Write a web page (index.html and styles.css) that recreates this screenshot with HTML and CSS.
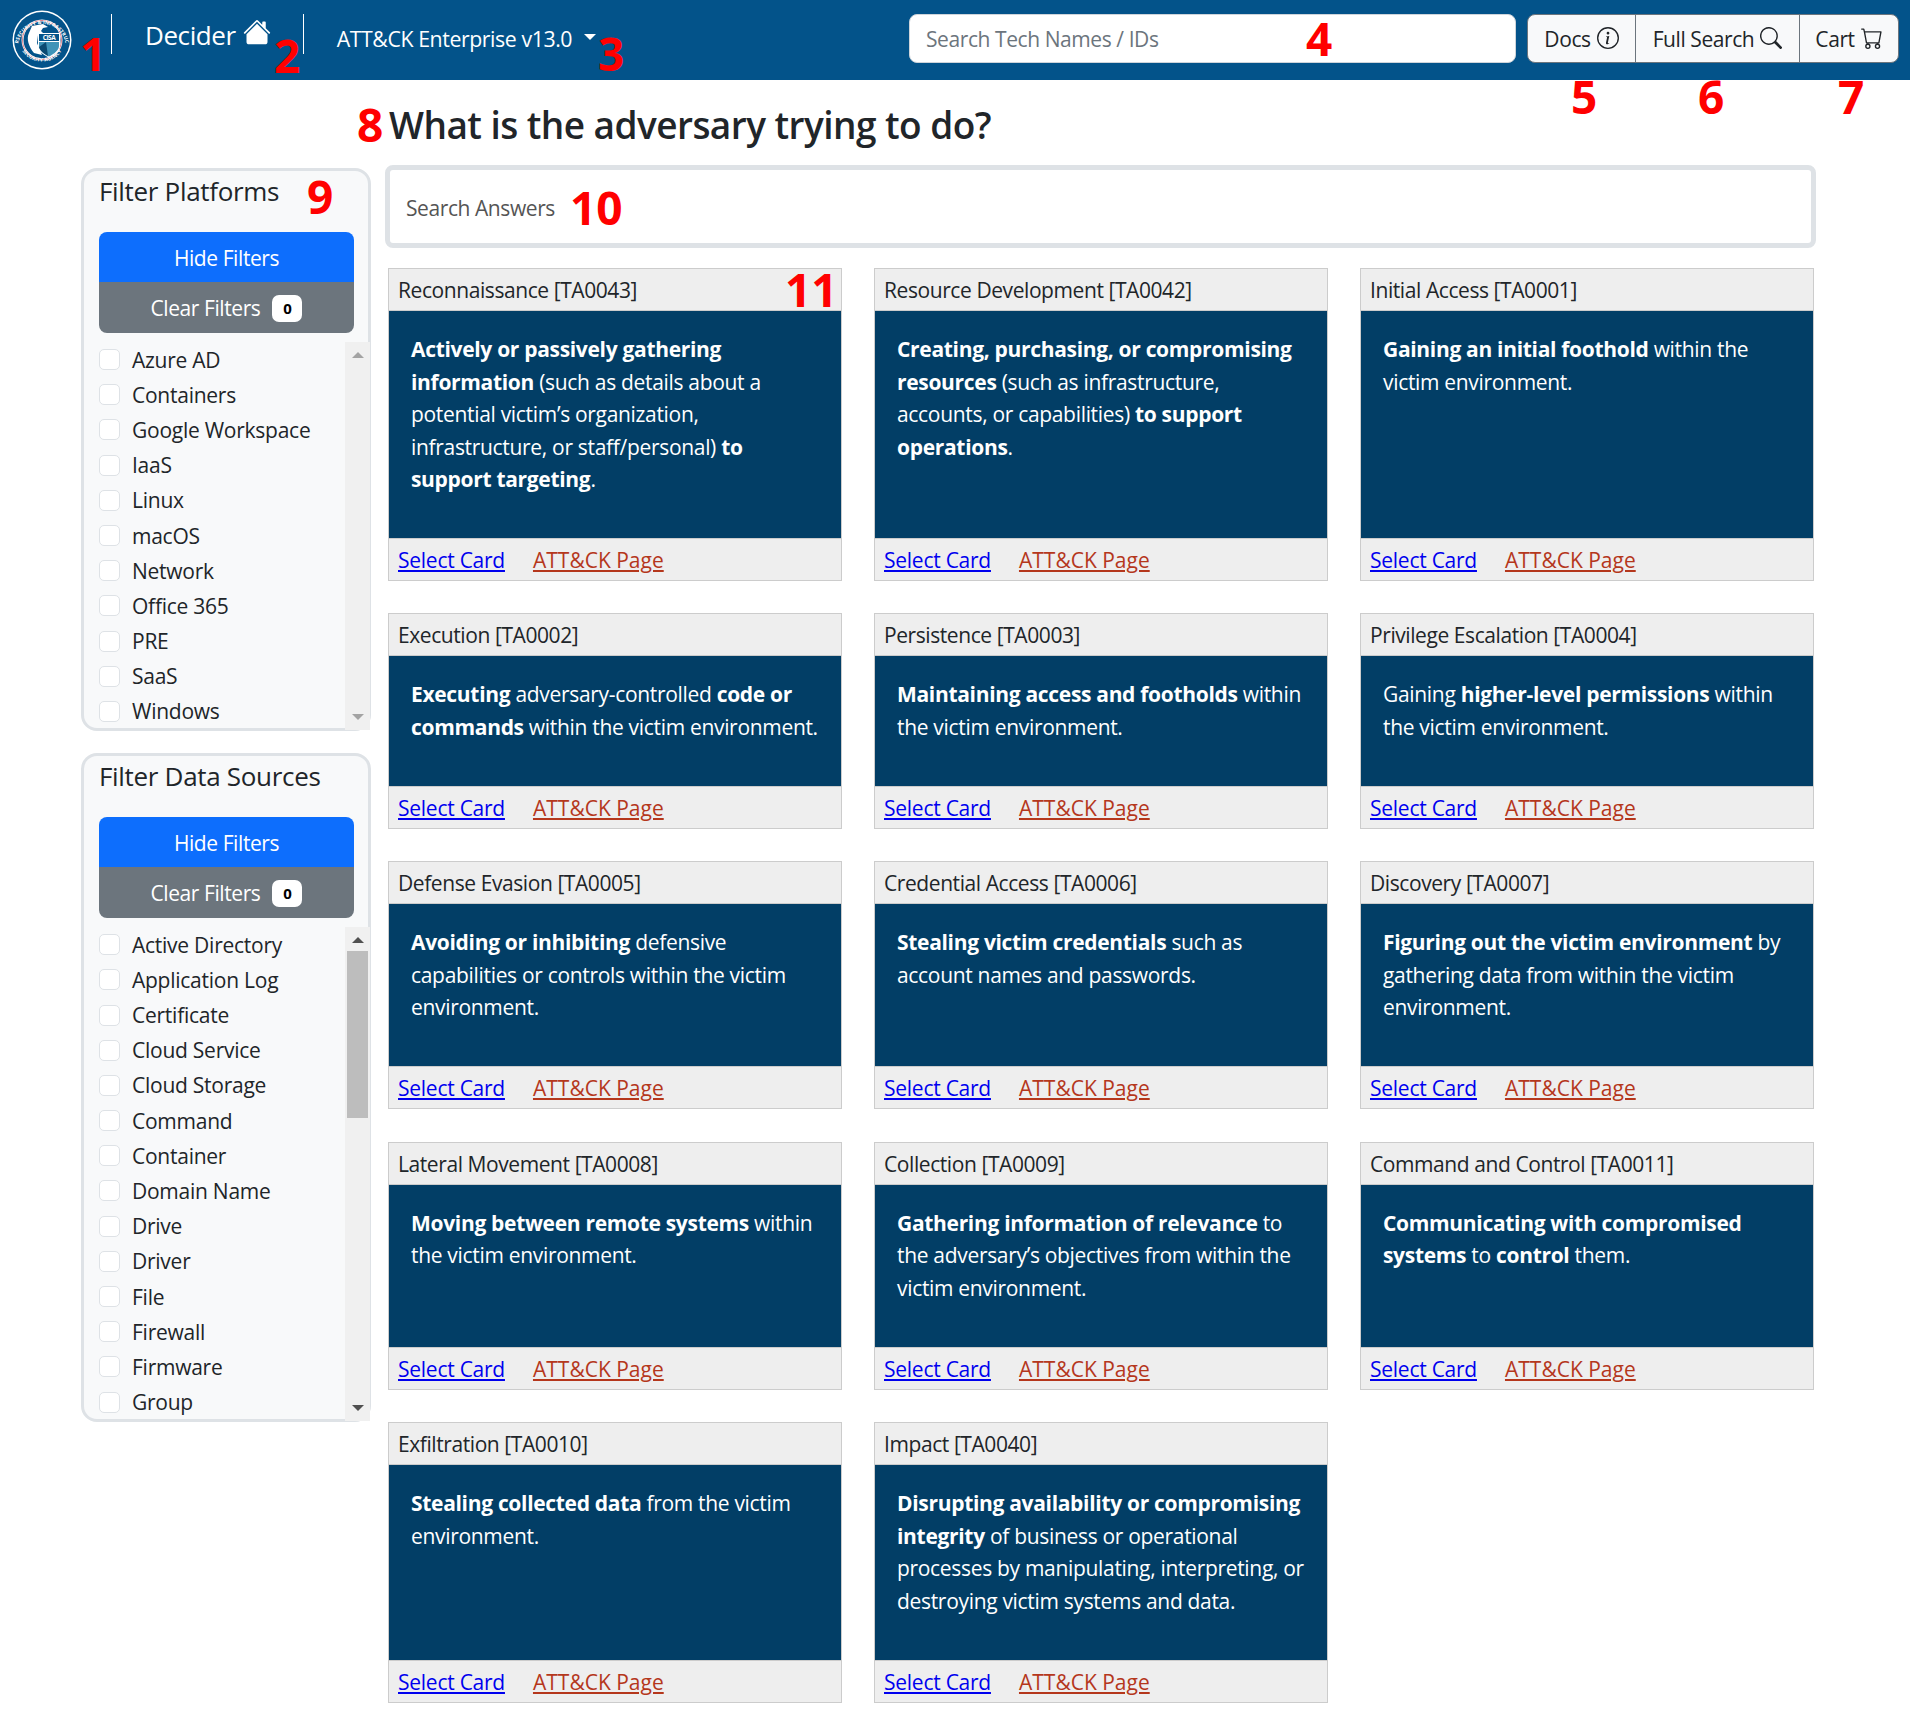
FILE: index.html
```html
<!DOCTYPE html>
<html lang="en">
<head>
<meta charset="utf-8">
<title>Decider</title>
<link rel="stylesheet" href="styles.css">
</head>
<body>
<header class="navbar">
  <svg class="logo" viewBox="0 0 60 60" aria-label="CISA seal">
    <defs>
      <path id="ringTop" d="M6.5 33 A24 24 0 0 1 53.5 33"/>
      <path id="ringBottom" d="M11 42 A23.5 23.5 0 0 0 49 42"/>
    </defs>
    <circle cx="30" cy="30" r="29.5" fill="#fff"/>
    <circle cx="30" cy="30" r="28" fill="#03538a"/>
    <circle cx="30" cy="30" r="20.5" fill="#fff"/>
    <circle cx="30" cy="30" r="19.5" fill="none" stroke="#d9808c" stroke-width="1"/>
    <circle cx="30" cy="30" r="18.5" fill="#03538a"/>
    <text class="seal-text"><textPath href="#ringTop" startOffset="50%" text-anchor="middle">CYBERSECURITY &amp; INFRASTRUCTURE</textPath></text>
    <text class="seal-text"><textPath href="#ringBottom" startOffset="50%" text-anchor="middle">SECURITY AGENCY</textPath></text>
    <path d="M20 16 L31 14 L36 17 L31 18 L29 21 L31 23 L26 25 L25 33 L30 45 L22 43 C17 37 14 29 17 23 Z" fill="#fff"/>
    <path d="M26 23 H48 V36 C48 41 43 45 37 47.5 C31 45 26 41 26 36 Z" fill="#fff"/>
    <path d="M27 24 H47 V31 H27 Z" fill="#03538a"/>
    <path d="M27 32 H47 V36 C47 40 42 44 37 46.5 C32 44 27 40 27 36 Z" fill="#3f93b8"/>
    <path d="M27 37 L34 32 L36 46 C32 44 28 41 27 37 Z" fill="#0b4a72"/>
    <text class="seal-cisa" x="37" y="30">CISA</text>
  </svg>
  <span class="nav-sep"></span>
  <a class="brand">Decider
    <svg class="brand-icon" viewBox="0 0 16 16" fill="currentColor"><path d="M8.707 1.5a1 1 0 0 0-1.414 0L.646 8.146a.5.5 0 0 0 .708.708L8 2.207l6.646 6.647a.5.5 0 0 0 .708-.708L13 5.793V2.5a.5.5 0 0 0-.5-.5h-1a.5.5 0 0 0-.5.5v1.293L8.707 1.5Z"/><path d="m8 3.293 6 6V13.5a1.5 1.5 0 0 1-1.5 1.5h-9A1.5 1.5 0 0 1 2 13.5V9.293l6-6Z"/></svg>
  </a>
  <span class="nav-sep nav-sep-second"></span>
  <a class="version">ATT&amp;CK Enterprise v13.0<span class="caret"></span></a>
  <input class="tech-search" type="text" placeholder="Search Tech Names / IDs">
  <div class="btn-group">
    <a class="group-btn group-docs">Docs
      <svg class="group-icon" viewBox="0 0 16 16" fill="currentColor"><path d="M8 15A7 7 0 1 1 8 1a7 7 0 0 1 0 14zm0 1A8 8 0 1 0 8 0a8 8 0 0 0 0 16z"/><path d="m8.93 6.588-2.29.287-.082.38.45.083c.294.07.352.176.288.469l-.738 3.468c-.194.897.105 1.319.808 1.319.545 0 1.178-.252 1.465-.598l.088-.416c-.2.176-.492.246-.686.246-.275 0-.375-.193-.304-.533L8.93 6.588zM9 4.5a1 1 0 1 1-2 0 1 1 0 0 1 2 0z"/></svg>
    </a>
    <a class="group-btn group-search">Full Search
      <svg class="group-icon" viewBox="0 0 16 16" fill="currentColor"><path d="M11.742 10.344a6.5 6.5 0 1 0-1.397 1.398h-.001c.03.04.062.078.098.115l3.85 3.85a1 1 0 0 0 1.415-1.414l-3.85-3.85a1.007 1.007 0 0 0-.115-.1zM12 6.5a5.5 5.5 0 1 1-11 0 5.5 5.5 0 0 1 11 0z"/></svg>
    </a>
    <a class="group-btn group-cart">Cart
      <svg class="group-icon" viewBox="0 0 16 16" fill="currentColor"><path d="M0 1.5A.5.5 0 0 1 .5 1H2a.5.5 0 0 1 .485.379L2.89 3H14.5a.5.5 0 0 1 .491.592l-1.5 8A.5.5 0 0 1 13 12H4a.5.5 0 0 1-.491-.408L2.01 3.607 1.61 2H.5a.5.5 0 0 1-.5-.5zM3.102 4l1.313 7h8.17l1.313-7H3.102zM5 12a2 2 0 1 0 0 4 2 2 0 0 0 0-4zm7 0a2 2 0 1 0 0 4 2 2 0 0 0 0-4zm-7 1a1 1 0 1 1 0 2 1 1 0 0 1 0-2zm7 0a1 1 0 1 1 0 2 1 1 0 0 1 0-2z"/></svg>
    </a>
  </div>
</header>

<main class="page">
  <h1 class="page-title">What is the adversary trying to do?</h1>

  <aside class="sidebar">
    <section class="filter">
      <h2 class="filter-title">Filter Platforms</h2>
      <div class="filter-actions">
        <button class="filter-btn filter-hide">Hide Filters</button>
        <button class="filter-btn filter-clear">Clear Filters <span class="count">0</span></button>
      </div>
      <div class="filter-body">
        <div class="check-list">
          <label class="check"><input type="checkbox">Azure AD</label>
          <label class="check"><input type="checkbox">Containers</label>
          <label class="check"><input type="checkbox">Google Workspace</label>
          <label class="check"><input type="checkbox">IaaS</label>
          <label class="check"><input type="checkbox">Linux</label>
          <label class="check"><input type="checkbox">macOS</label>
          <label class="check"><input type="checkbox">Network</label>
          <label class="check"><input type="checkbox">Office 365</label>
          <label class="check"><input type="checkbox">PRE</label>
          <label class="check"><input type="checkbox">SaaS</label>
          <label class="check"><input type="checkbox">Windows</label>
        </div>
        <div class="scrollbar scrollbar-idle">
          <span class="arrow arrow-up"></span>
          <span class="thumb-track"></span>
          <span class="arrow arrow-down"></span>
        </div>
      </div>
    </section>

    <section class="filter">
      <h2 class="filter-title">Filter Data Sources</h2>
      <div class="filter-actions">
        <button class="filter-btn filter-hide">Hide Filters</button>
        <button class="filter-btn filter-clear">Clear Filters <span class="count">0</span></button>
      </div>
      <div class="filter-body">
        <div class="check-list">
          <label class="check"><input type="checkbox">Active Directory</label>
          <label class="check"><input type="checkbox">Application Log</label>
          <label class="check"><input type="checkbox">Certificate</label>
          <label class="check"><input type="checkbox">Cloud Service</label>
          <label class="check"><input type="checkbox">Cloud Storage</label>
          <label class="check"><input type="checkbox">Command</label>
          <label class="check"><input type="checkbox">Container</label>
          <label class="check"><input type="checkbox">Domain Name</label>
          <label class="check"><input type="checkbox">Drive</label>
          <label class="check"><input type="checkbox">Driver</label>
          <label class="check"><input type="checkbox">File</label>
          <label class="check"><input type="checkbox">Firewall</label>
          <label class="check"><input type="checkbox">Firmware</label>
          <label class="check"><input type="checkbox">Group</label>
        </div>
        <div class="scrollbar">
          <span class="arrow arrow-up"></span>
          <span class="thumb-track"><span class="thumb"></span></span>
          <span class="arrow arrow-down"></span>
        </div>
      </div>
    </section>
  </aside>

  <div class="content">
    <input class="answer-search" type="text" placeholder="Search Answers">
    <div class="cards">
      <article class="card"><div class="card-head">Reconnaissance [TA0043]</div><div class="card-body"><b>Actively or passively gathering information</b> (such as details about a potential victim’s organization, infrastructure, or staff/personal) <b>to support targeting</b>.</div><div class="card-foot"><a class="link-select">Select Card</a><a class="link-attack">ATT&amp;CK Page</a></div></article>
      <article class="card"><div class="card-head">Resource Development [TA0042]</div><div class="card-body"><b>Creating, purchasing, or compromising resources</b> (such as infrastructure, accounts, or capabilities) <b>to support operations</b>.</div><div class="card-foot"><a class="link-select">Select Card</a><a class="link-attack">ATT&amp;CK Page</a></div></article>
      <article class="card"><div class="card-head">Initial Access [TA0001]</div><div class="card-body"><b>Gaining an initial foothold</b> within the victim environment.</div><div class="card-foot"><a class="link-select">Select Card</a><a class="link-attack">ATT&amp;CK Page</a></div></article>

      <article class="card"><div class="card-head">Execution [TA0002]</div><div class="card-body"><b>Executing</b> adversary-controlled <b>code or commands</b> within the victim environment.</div><div class="card-foot"><a class="link-select">Select Card</a><a class="link-attack">ATT&amp;CK Page</a></div></article>
      <article class="card"><div class="card-head">Persistence [TA0003]</div><div class="card-body"><b>Maintaining access and footholds</b> within the victim environment.</div><div class="card-foot"><a class="link-select">Select Card</a><a class="link-attack">ATT&amp;CK Page</a></div></article>
      <article class="card"><div class="card-head">Privilege Escalation [TA0004]</div><div class="card-body">Gaining <b>higher-level permissions</b> within the victim environment.</div><div class="card-foot"><a class="link-select">Select Card</a><a class="link-attack">ATT&amp;CK Page</a></div></article>

      <article class="card"><div class="card-head">Defense Evasion [TA0005]</div><div class="card-body"><b>Avoiding or inhibiting</b> defensive capabilities or controls within the victim environment.</div><div class="card-foot"><a class="link-select">Select Card</a><a class="link-attack">ATT&amp;CK Page</a></div></article>
      <article class="card"><div class="card-head">Credential Access [TA0006]</div><div class="card-body"><b>Stealing victim credentials</b> such as account names and passwords.</div><div class="card-foot"><a class="link-select">Select Card</a><a class="link-attack">ATT&amp;CK Page</a></div></article>
      <article class="card"><div class="card-head">Discovery [TA0007]</div><div class="card-body"><b>Figuring out the victim environment</b> by gathering data from within the victim environment.</div><div class="card-foot"><a class="link-select">Select Card</a><a class="link-attack">ATT&amp;CK Page</a></div></article>

      <article class="card"><div class="card-head">Lateral Movement [TA0008]</div><div class="card-body"><b>Moving between remote systems</b> within the victim environment.</div><div class="card-foot"><a class="link-select">Select Card</a><a class="link-attack">ATT&amp;CK Page</a></div></article>
      <article class="card"><div class="card-head">Collection [TA0009]</div><div class="card-body"><b>Gathering information of relevance</b> to the adversary’s objectives from within the victim environment.</div><div class="card-foot"><a class="link-select">Select Card</a><a class="link-attack">ATT&amp;CK Page</a></div></article>
      <article class="card"><div class="card-head">Command and Control [TA0011]</div><div class="card-body"><b>Communicating with compromised systems</b> to <b>control</b> them.</div><div class="card-foot"><a class="link-select">Select Card</a><a class="link-attack">ATT&amp;CK Page</a></div></article>

      <article class="card"><div class="card-head">Exfiltration [TA0010]</div><div class="card-body"><b>Stealing collected data</b> from the victim environment.</div><div class="card-foot"><a class="link-select">Select Card</a><a class="link-attack">ATT&amp;CK Page</a></div></article>
      <article class="card"><div class="card-head">Impact [TA0040]</div><div class="card-body"><b>Disrupting availability or compromising integrity</b> of business or operational processes by manipulating, interpreting, or destroying victim systems and data.</div><div class="card-foot"><a class="link-select">Select Card</a><a class="link-attack">ATT&amp;CK Page</a></div></article>
    </div>
  </div>
</main>

<span class="mark mark-1">1</span>
<span class="mark mark-2">2</span>
<span class="mark mark-3">3</span>
<span class="mark mark-4">4</span>
<span class="mark mark-5">5</span>
<span class="mark mark-6">6</span>
<span class="mark mark-7">7</span>
<span class="mark mark-8">8</span>
<span class="mark mark-9">9</span>
<span class="mark mark-10">10</span>
<span class="mark mark-11">11</span>
</body>
</html>
```

FILE: styles.css
```css
* { box-sizing: border-box; }

html, body { margin: 0; padding: 0; }

body {
  position: relative;
  min-height: 1722px;
  background: #fff;
  color: #212529;
  font-family: "Open Sans", "Noto Sans", sans-serif;
  font-size: 21px;
  letter-spacing: -0.02em;
}

/* Navbar */
.navbar {
  display: flex;
  align-items: center;
  height: 80px;
  padding: 0 11px 0 12px;
  background: #03538a;
  color: #fff;
}

.logo { width: 60px; height: 60px; flex: none; }
.seal-text { font-size: 5px; font-weight: 700; fill: #fff; letter-spacing: 0.1px; }
.seal-cisa { font-size: 6.5px; font-weight: 700; fill: #fff; text-anchor: middle; }

.nav-sep {
  width: 1px;
  height: 40px;
  margin-left: 39px;
  margin-top: -12px;
  background: #fff;
  flex: none;
}
.nav-sep-second { margin-left: 32px; }

.brand {
  display: flex;
  align-items: center;
  gap: 7px;
  margin-left: 33px;
  margin-top: -10px;
  font-size: 26px;
}
.brand-icon { width: 28px; height: 28px; margin-top: -6px; }

.version {
  display: flex;
  align-items: center;
  margin-left: 33px;
  margin-top: -4px;
  font-size: 21.3px;
}
.caret {
  width: 0;
  height: 0;
  margin-left: 12px;
  margin-top: -2px;
  border-left: 6px solid transparent;
  border-right: 6px solid transparent;
  border-top: 6px solid #fff;
}

.tech-search {
  width: 607px;
  height: 49px;
  margin-left: auto;
  margin-top: -4px;
  padding: 2px 16px 0;
  border: 1px solid #ced4da;
  border-radius: 8px;
  background: #fff;
  font: inherit;
  font-size: 21px;
  letter-spacing: inherit;
}
.tech-search::placeholder { color: #6c757d; opacity: 1; }

.btn-group {
  display: flex;
  width: 372px;
  height: 49px;
  margin-left: 11px;
  margin-top: -4px;
  border: 1px solid #6c757d;
  border-radius: 8px;
  background: #f8f9fa;
  color: #212529;
  overflow: hidden;
}
.group-btn {
  display: flex;
  align-items: center;
  justify-content: center;
  gap: 6px;
  padding-top: 2px;
  border-right: 1px solid #6c757d;
  font-size: 21px;
}
.group-docs { width: 108px; }
.group-search { width: 164px; }
.group-cart { flex: 1; border-right: 0; }
.group-icon { width: 22px; height: 22px; margin-top: -2px; flex: none; }

/* Page */
.page {
  display: grid;
  grid-template-columns: 290px 1431px;
  grid-template-rows: 85px auto;
  column-gap: 14px;
  padding-left: 81px;
}

.page-title {
  grid-column: 2;
  margin: 0;
  padding-left: 4px;
  font-size: 37px;
  font-weight: 600;
  letter-spacing: -0.55px;
  line-height: 90px;
}

.sidebar {
  display: flex;
  flex-direction: column;
  gap: 22px;
  margin-top: 3px;
}

.filter {
  border: 3px solid #dee2e6;
  border-radius: 16px;
  background: #f8f9fa;
}

.filter-title {
  margin: 0;
  padding: 1px 0 0 15px;
  height: 61px;
  font-size: 26px;
  font-weight: 400;
  letter-spacing: -0.012em;
  line-height: 38px;
}

.filter-actions {
  display: flex;
  flex-direction: column;
  margin: 0 14px 0 15px;
  border-radius: 8px;
  overflow: hidden;
}

.filter-btn {
  display: flex;
  align-items: center;
  justify-content: center;
  gap: 12px;
  height: 50px;
  padding-top: 2px;
  border: 0;
  color: #fff;
  font: inherit;
  font-size: 21px;
  letter-spacing: inherit;
}
.filter-hide { background: #0d6efd; }
.filter-clear { background: #6c757d; height: 51px; }

.count {
  display: inline-block;
  width: 30px;
  height: 27px;
  border-radius: 7px;
  background: #fff;
  color: #000;
  font-size: 15px;
  font-weight: 700;
  line-height: 27px;
  text-align: center;
}

.filter-body {
  display: flex;
  justify-content: space-between;
  margin-top: 9px;
  margin-right: -2px;
  margin-bottom: -2px;
}

.check-list { display: flex; flex-direction: column; padding: 0 0 1px 15px; }

.check {
  display: flex;
  align-items: center;
  gap: 12px;
  height: 35.2px;
  font-size: 21px;
  letter-spacing: -0.012em;
}
.check input {
  appearance: none;
  width: 21px;
  height: 21px;
  margin: 0;
  border: 1px solid #dee2e6;
  border-radius: 5px;
  background: #fff;
}

.scrollbar {
  display: flex;
  flex-direction: column;
  align-items: center;
  width: 25px;
  background: #f0f0f0;
}
.arrow {
  flex: none;
  width: 0;
  height: 0;
  margin: 10px 0 8px;
  border-left: 6px solid transparent;
  border-right: 6px solid transparent;
}
.arrow-up { border-bottom: 6px solid #505050; }
.arrow-down { border-top: 6px solid #505050; margin: 8px 0 10px; }
.scrollbar-idle .arrow-up { border-bottom-color: #a3a3a3; }
.scrollbar-idle .arrow-down { border-top-color: #a3a3a3; }
.thumb-track { flex: 1; width: 100%; padding: 0 2px; }
.thumb { display: block; height: 167px; background: #bdbdbd; }

/* Content */
.content { min-width: 0; }

.answer-search {
  display: block;
  width: 1431px;
  height: 83px;
  padding: 2px 16px 0;
  border: 5px solid #dee2e6;
  border-radius: 8px;
  background: #fff;
  font: inherit;
  font-size: 21px;
  letter-spacing: inherit;
}
.answer-search::placeholder { color: #555; opacity: 1; }

.cards {
  display: grid;
  grid-template-columns: repeat(3, 454px);
  gap: 32.4px 32px;
  margin: 20px 0 0 3px;
}

.card {
  display: flex;
  flex-direction: column;
  border: 1px solid #ccc;
  background: #eee;
}

.card-head {
  height: 42px;
  padding: 1px 0 0 9px;
  border-bottom: 1px solid #ccc;
  line-height: 41px;
}

.card-body {
  flex: 1;
  padding: 22px 21px 42.5px 22px;
  background: #023e66;
  color: #fff;
  letter-spacing: -0.015em;
  line-height: 32.5px;
}
.card-body b { font-weight: 700; }

.card-foot {
  display: flex;
  gap: 28px;
  height: 42px;
  padding: 1px 0 0 9px;
  border-top: 1px solid #ccc;
  line-height: 41px;
}
.link-select { color: #0000ee; text-decoration: underline; letter-spacing: -0.012em; }
.link-attack { color: #b5371c; text-decoration: underline; letter-spacing: 0; }

/* Red call-out numbers on top of the page */
.mark {
  position: absolute;
  color: #f00;
  font-family: "Open Sans", "Noto Sans", sans-serif;
  font-size: 46px;
  font-weight: 700;
  letter-spacing: 0;
  line-height: 46px;
}
.mark-1 { left: 80px; top: 30px; }
.mark-2 { left: 274px; top: 32px; }
.mark-3 { left: 598px; top: 30px; }
.mark-4 { left: 1306px; top: 15px; }
.mark-5 { left: 1571px; top: 73px; }
.mark-6 { left: 1698px; top: 73px; }
.mark-7 { left: 1838px; top: 73px; }
.mark-8 { left: 357px; top: 101px; }
.mark-9 { left: 307px; top: 173px; }
.mark-10 { left: 570px; top: 184px; }
.mark-11 { left: 785px; top: 266px; }
```
